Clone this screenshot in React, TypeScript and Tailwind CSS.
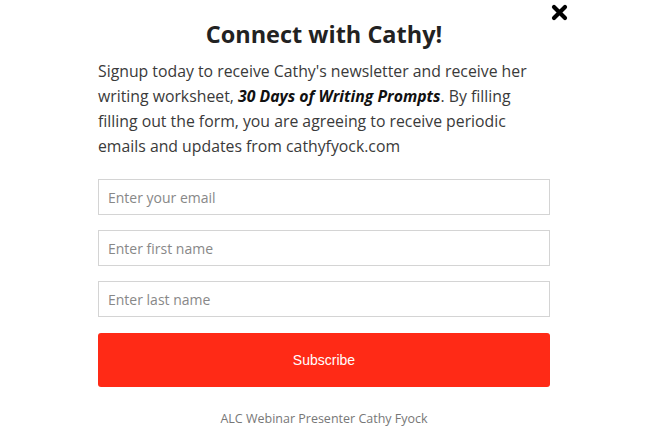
import React from 'react';

export default function App() {
  return (
    <div className="relative w-[650px] h-[437px] bg-white overflow-hidden" style={{ fontFamily: '"Open Sans", sans-serif' }}>
      {/* close button */}
      <button className="absolute left-[550px] top-[3px] w-[18px] h-[18px] flex items-center justify-center">
        <svg width="17" height="17" viewBox="0 0 17 17">
          <path d="M3 3 L14 14 M14 3 L3 14" stroke="#000" strokeWidth="4.2" strokeLinecap="round" />
        </svg>
      </button>

      <div className="ml-[98px] w-[452px] pt-[19px]">
        <h1 className="text-center text-[23.5px] leading-[30px] font-bold text-[#222]">Connect with Cathy!</h1>
        <p className="mt-[10px] text-[15.8px] leading-[25px] text-[#3a3a3a]">
          Signup today to receive Cathy's newsletter and receive her writing worksheet,{' '}
          <strong className="italic font-bold text-[#111]">30 Days of Writing Prompts</strong>. By filling filling out the form, you are agreeing to receive periodic emails and updates from cathyfyock.com
        </p>

        <form className="mt-[20px] flex flex-col gap-[15px]">
          <input
            type="email"
            placeholder="Enter your email"
            className="h-[36px] w-full border border-[#d4d4d4] px-[9px] text-[14px] text-[#555] placeholder:text-[#888] outline-none"
          />
          <input
            type="text"
            placeholder="Enter first name"
            className="h-[36px] w-full border border-[#d4d4d4] px-[9px] text-[14px] text-[#555] placeholder:text-[#888] outline-none"
          />
          <input
            type="text"
            placeholder="Enter last name"
            className="h-[36px] w-full border border-[#d4d4d4] px-[9px] text-[14px] text-[#555] placeholder:text-[#888] outline-none"
          />
          <button
            type="button"
            className="mt-px h-[54px] w-full rounded-[3px] bg-[#ff2a16] text-white text-[14px]"
            style={{ fontFamily: '"Liberation Sans", Arial, sans-serif' }}
          >
            Subscribe
          </button>
        </form>

        <p className="mt-[23px] text-center text-[12.5px] leading-[18px] text-[#777]">ALC Webinar Presenter Cathy Fyock</p>
      </div>
    </div>
  );
}
